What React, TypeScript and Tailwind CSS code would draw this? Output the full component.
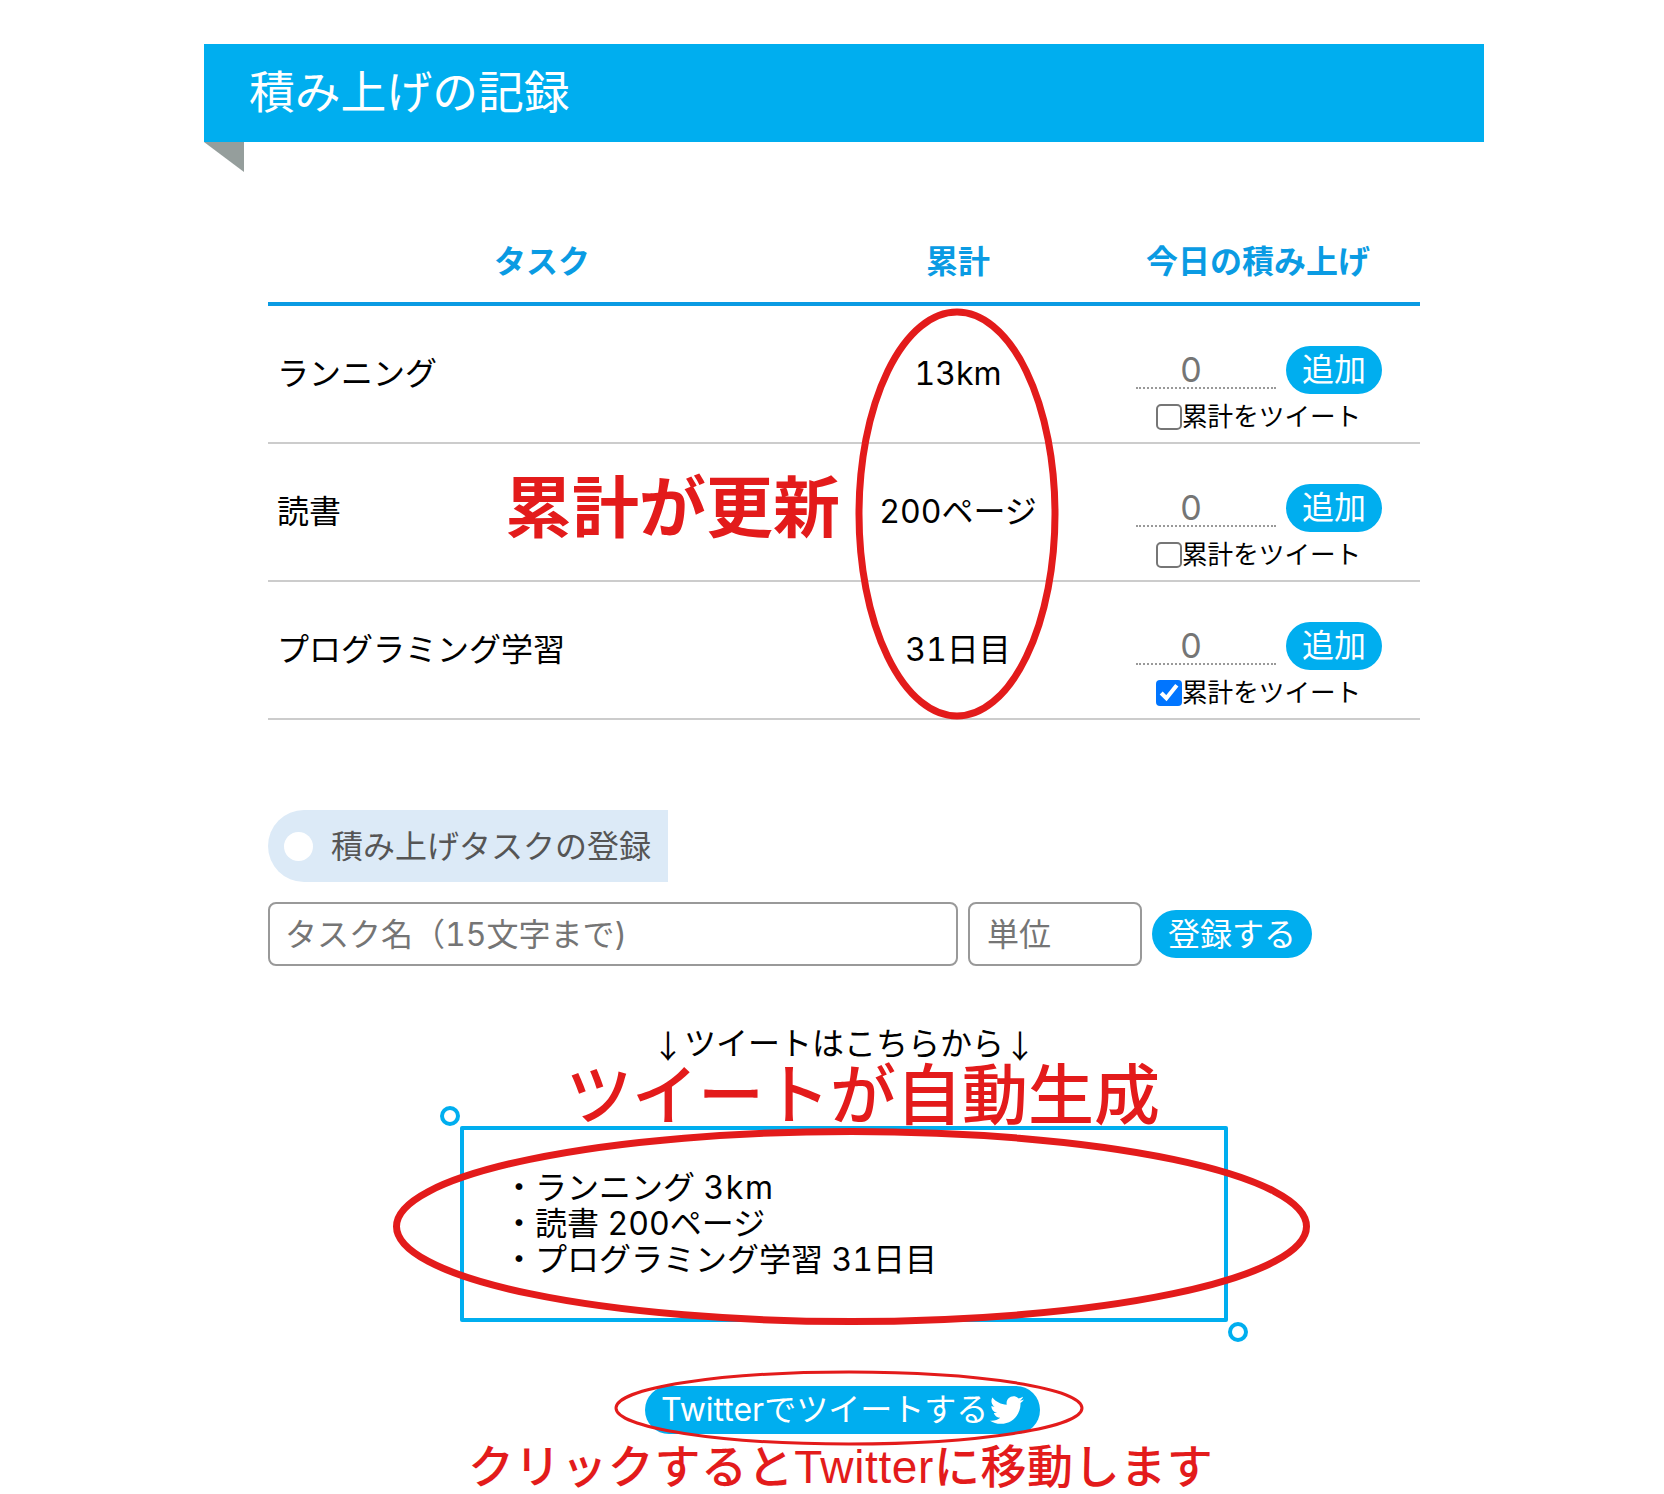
import { FaTwitter } from "react-icons/fa";

const rows = [
  { name: "ランニング", total: "13km", checked: false },
  { name: "読書", total: "200ページ", checked: false },
  { name: "プログラミング学習", total: "31日目", checked: true },
];

export default function App() {
  return (
    <div className="relative h-[1494px] w-full overflow-hidden bg-white pt-[44px] font-['Inter','Noto_Sans_CJK_JP',sans-serif] tabular-nums text-black">
      <div className="ml-[204px] w-[1280px]">
        <div className="flex h-[98px] items-center bg-[#00aeef] pl-[45px] text-[45.8px] leading-none text-white">
          積み上げの記録
        </div>
        <div className="h-[30px] w-[40px] bg-[#959e9c] [clip-path:polygon(0_0,100%_0,100%_100%)]" />

        <div className="mx-[64px] mt-[48px] w-[1152px]">
          <div className="grid h-[86px] grid-cols-[548px_284px_320px] items-center border-b-4 border-[#0a9be3] pt-[2px] text-center text-[32px] font-bold text-[#0a9be3]">
            <div>タスク</div>
            <div>累計</div>
            <div className="pr-[4px]">今日の積み上げ</div>
          </div>
          {rows.map((r) => (
            <div
              key={r.name}
              className="grid h-[138px] grid-cols-[548px_284px_320px] items-center border-b-2 border-[#cccccc] text-[32px]"
            >
              <div className="pl-[9px]">{r.name}</div>
              <div className="text-center">{r.total}</div>
              <div className="flex flex-col pl-[36px] pt-[28px]">
                <div className="flex items-start gap-[10px]">
                  <div className="flex h-[43px] w-[140px] items-center justify-center border-b-2 border-dotted border-[#999999] pr-[30px] pt-[6px] text-[34px] text-[#757575]">
                    0
                  </div>
                  <div className="flex h-[48px] w-[96px] items-center justify-center rounded-full bg-[#00aeef] text-white">
                    追加
                  </div>
                </div>
                <label className="mt-[10px] flex h-[26px] items-center pl-[20px] text-[25.6px] leading-none">
                  <input
                    type="checkbox"
                    defaultChecked={r.checked}
                    className="m-0 h-[13px] w-[13px] shrink-0 [zoom:2]"
                  />
                  <span className="whitespace-nowrap">累計をツイート</span>
                </label>
              </div>
            </div>
          ))}

          <div className="mt-[90px] flex h-[72px] w-[400px] items-center rounded-l-[36px] bg-[#dceaf7] pl-[16px] text-[32px] text-[#555555]">
            <span className="h-[29px] w-[29px] rounded-full bg-white" />
            <span className="ml-[18px] whitespace-nowrap pt-[2px]">積み上げタスクの登録</span>
          </div>

          <div className="mt-[20px] flex items-center text-[32px]">
            <div className="flex h-[64px] w-[690px] items-center rounded-[8px] border-2 border-[#999999] pl-[15px] pt-[2px] text-[#757575]">
              タスク名（15文字まで)
            </div>
            <div className="ml-[10px] flex h-[64px] w-[174px] items-center rounded-[8px] border-2 border-[#999999] pl-[17px] pt-[2px] text-[#757575]">
              単位
            </div>
            <div className="ml-[10px] flex h-[48px] w-[160px] items-center justify-center rounded-full bg-[#00aeef] pt-[2px] text-white">
              登録する
            </div>
          </div>
        </div>

        <div className="mt-[56px] flex h-[44px] items-center justify-center text-[32px] leading-none">
          <span className="font-['Noto_Sans_CJK_JP',sans-serif] leading-none">↓</span>
          <span className="leading-none">ツイートはこちらから</span>
          <span className="font-['Noto_Sans_CJK_JP',sans-serif] leading-none">↓</span>
        </div>

        <div className="relative mx-auto mt-[60px] h-[196px] w-[768px] rounded-[2px] border-4 border-[#00aeef] pl-[39px] pt-[40px] text-[32px] leading-[36px]">
          <div>
            ・ランニング <span className="tracking-[1.5px]">3km</span>
          </div>
          <div>・読書 200ページ</div>
          <div>・プログラミング学習 31日目</div>
          <span className="absolute left-[-24px] top-[-24px] h-[20px] w-[20px] rounded-full border-[4px] border-[#00aeef]" />
          <span className="absolute bottom-[-24px] right-[-24px] h-[20px] w-[20px] rounded-full border-[4px] border-[#00aeef]" />
        </div>

        <div className="mt-[64px] flex justify-center">
          <div className="mr-[3px] flex h-[48px] w-[395px] items-center whitespace-nowrap rounded-full bg-[#00aeef] pl-[16px] text-[32px] text-white">
            Twitterでツイートする
            <FaTwitter className="ml-[2px] h-[34px] w-[34px]" />
          </div>
        </div>
      </div>

      <svg className="pointer-events-none absolute left-0 top-0" width="1664" height="1494" fill="none" stroke="#e31b1b">
        <ellipse cx="957" cy="514" rx="98" ry="202" strokeWidth="7" />
        <ellipse cx="851.5" cy="1226.5" rx="455" ry="95" strokeWidth="7" />
        <ellipse cx="849" cy="1408" rx="233" ry="36" strokeWidth="3" />
      </svg>

      <span className="absolute left-[505px] top-[474px] whitespace-nowrap text-[67px] font-bold leading-[67px] text-[#e31b1b]">累計が更新</span>
      <span className="absolute left-[566px] top-[1062px] whitespace-nowrap text-[66px] font-medium leading-[66px] text-[#e31b1b]">ツイートが自動生成</span>
      <span className="absolute left-[468px] top-[1443px] whitespace-nowrap text-[46px] font-medium leading-[46px] tracking-[0.6px] text-[#e31b1b]">
        クリックすると<span className="font-['Liberation_Sans',sans-serif]">Twitter</span>に移動します
      </span>
    </div>
  );
}
